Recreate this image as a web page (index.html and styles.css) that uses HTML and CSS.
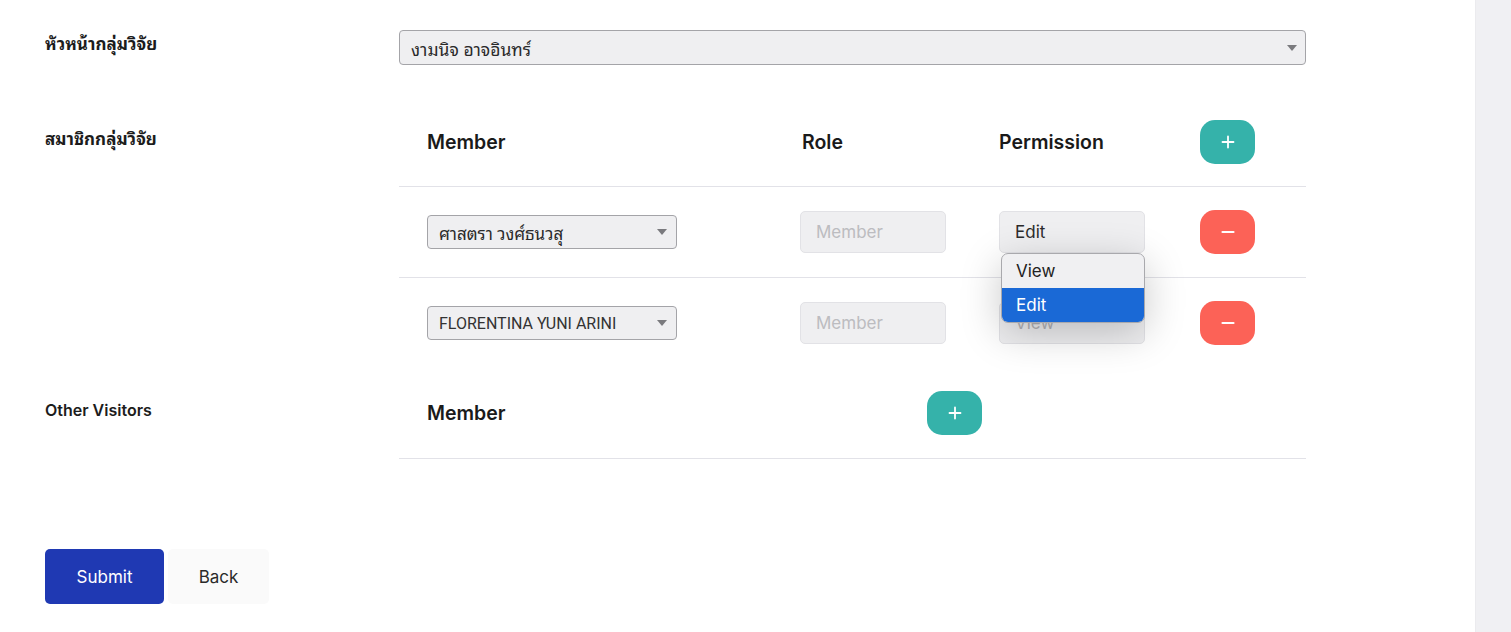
FILE: index.html
```html
<!DOCTYPE html>
<html lang="th">
<head>
<meta charset="utf-8">
<title>Research group</title>
<link rel="stylesheet" href="styles.css">
</head>
<body>
<div class="page">
  <main class="main">
    <div class="form-row row-head">
      <div class="label label-head thai">หัวหน้ากลุ่มวิจัย</div>
      <div class="select select-wide thai">
        <span>งามนิจ อาจอินทร์</span>
        <span class="caret"></span>
      </div>
    </div>

    <div class="form-row">
      <div class="label label-members thai">สมาชิกกลุ่มวิจัย</div>
      <div class="table">
        <div class="trow thead">
          <div class="th">Member</div>
          <div class="th th-role">Role</div>
          <div class="th">Permission</div>
          <div class="act"><button class="icon-btn add"><svg width="14" height="14" viewBox="0 0 14 14"><path d="M7 1.5v11M1.5 7h11" stroke="#fff" stroke-width="1.8" stroke-linecap="round"/></svg></button></div>
        </div>
        <div class="trow">
          <div><div class="select select-sm thai"><span>ศาสตรา วงศ์ธนวสุ</span><span class="caret"></span></div></div>
          <div><div class="input placeholder">Member</div></div>
          <div class="perm-cell">
            <div class="input perm">Edit</div>
            <div class="menu">
              <div class="opt">View</div>
              <div class="opt opt-on">Edit</div>
            </div>
          </div>
          <div class="act"><button class="icon-btn remove"><svg width="14" height="14" viewBox="0 0 14 14"><path d="M1.5 7h11" stroke="#fff" stroke-width="2.2" stroke-linecap="round"/></svg></button></div>
        </div>
        <div class="trow last">
          <div><div class="select select-sm latin"><span>FLORENTINA YUNI ARINI</span><span class="caret"></span></div></div>
          <div><div class="input placeholder">Member</div></div>
          <div><div class="input perm muted">View</div></div>
          <div class="act"><button class="icon-btn remove"><svg width="14" height="14" viewBox="0 0 14 14"><path d="M1.5 7h11" stroke="#fff" stroke-width="2.2" stroke-linecap="round"/></svg></button></div>
        </div>
      </div>
    </div>

    <div class="form-row">
      <div class="label label-visitors">Other Visitors</div>
      <div class="table">
        <div class="trow thead visitors">
          <div class="th">Member</div>
          <div class="act"><button class="icon-btn add"><svg width="14" height="14" viewBox="0 0 14 14"><path d="M7 1.5v11M1.5 7h11" stroke="#fff" stroke-width="1.8" stroke-linecap="round"/></svg></button></div>
        </div>
      </div>
    </div>

    <div class="actions">
      <button class="btn btn-primary">Submit</button>
      <button class="btn btn-plain">Back</button>
    </div>
  </main>
  <aside class="rail"></aside>
</div>
</body>
</html>
```

FILE: styles.css
```css
* { box-sizing: border-box; }
html, body { margin: 0; padding: 0; background: #fff; }
body {
  font-family: Inter, "Noto Sans Thai", "Noto Sans", "Liberation Sans", sans-serif;
  color: #1c1c1c;
}
.thai {
  font-family: "Noto Sans Thai Looped", "Noto Serif Thai", Loma, Garuda, Tahoma, "Noto Sans Thai", "Noto Sans", sans-serif;
}
.page { display: flex; min-height: 632px; }
.main { flex: 1; padding: 30px 0 0 45px; }
.rail { width: 36px; background: #f0f0f3; border-left: 1px solid #ebebee; }

.form-row { display: grid; grid-template-columns: 354px 907px; }
.row-head { margin-bottom: 32px; }

.label { font-size: 16px; font-weight: 700; line-height: 18px; color: #1c1c1c; }
.label.thai { font-size: 17px; }
.label-head { padding-top: 4px; }
.label-members { padding-top: 32px; }
.label-visitors { padding-top: 33px; font-weight: 600; }

.select {
  display: flex; align-items: center; justify-content: space-between;
  background: #efeff1; border: 1px solid #a4a4a8; border-radius: 4px;
  font-size: 16px; color: #2a2a2a;
}
.select.thai { font-size: 17px; }
.select-wide.thai { font-size: 17.5px; }
.select-wide { height: 35px; padding: 0 8px 0 11px; }
.select-sm { width: 250px; height: 34px; padding: 0 9px 0 11px; }
.latin { font-family: Roboto, "Liberation Sans", sans-serif; font-size: 16px; color: #333; }
.caret { width: 0; height: 0; border-left: 5px solid transparent; border-right: 5px solid transparent; border-top: 6px solid #7a7a7e; }

.table { display: flex; flex-direction: column; }
.trow {
  display: grid; grid-template-columns: 373px 199px 201px 1fr;
  align-items: center; padding-left: 28px;
  height: 91px; border-bottom: 1px solid #e2e2e8;
}
.thead { height: 90px; }
.trow.last { border-bottom: none; height: 90px; }
.trow.visitors { grid-template-columns: 500px 1fr; height: 91px; }
.th { font-size: 19.5px; font-weight: 600; color: #1a1a1a; }
.th-role { padding-left: 2px; }

.input {
  width: 146px; height: 42px; display: flex; align-items: center;
  background: #efeff1; border: 1px solid #e2e2e6; border-radius: 5px;
  padding: 0 15px; font-size: 17px; color: #2b2b2b;
}
.placeholder { color: #bcbcc0; }
.muted { color: #b4b4b8; }

.perm-cell { position: relative; }
.menu {
  position: absolute; top: 42px; left: 2px; width: 144px;
  background: #f0f0f2; border: 1px solid #a9a9ad; border-radius: 7px;
  overflow: hidden; z-index: 5;
  box-shadow: 0 10px 40px rgba(0, 0, 0, 0.22);
}
.opt { height: 34px; display: flex; align-items: center; padding-left: 14px; font-size: 17px; color: #222; }
.opt-on { background: #1a69d6; color: #fff; }

.icon-btn {
  width: 55px; height: 44px; border: none; border-radius: 15px;
  display: flex; align-items: center; justify-content: center; padding: 0; cursor: pointer;
}
.add { background: #35b2aa; }
.remove { background: #fc6257; }

.actions { display: flex; gap: 4px; margin-top: 90px; }
.btn { height: 55px; border: none; border-radius: 5px; font-family: Inter, "Liberation Sans", sans-serif; font-size: 17px; cursor: pointer; }
.btn-primary { width: 119px; background: #1f39b3; color: #fff; }
.btn-plain { width: 101px; background: #fafafa; color: #2a2a2a; }
```
